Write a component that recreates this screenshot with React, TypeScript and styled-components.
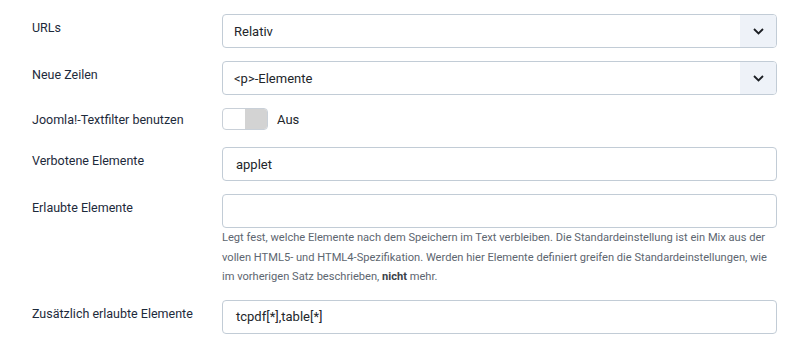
import React from "react";
import styled, { createGlobalStyle } from "styled-components";

const GlobalStyle = createGlobalStyle`
  html, body {
    margin: 0;
    padding: 0;
    background: #ffffff;
  }
  body {
    font-family: Roboto, "Noto Sans", "Liberation Sans", sans-serif;
    color: #1f2b3a;
  }
  * {
    box-sizing: border-box;
  }
`;

const Form = styled.div`
  width: 794px;
  padding: 14px 17px 0 32px;
  display: grid;
  gap: 13px;
`;

const Row = styled.div`
  display: grid;
  grid-template-columns: 190px 555px;
  align-items: start;
`;

const Label = styled.label<{ $top?: number }>`
  font-size: 12.5px;
  line-height: 19.5px;
  padding-top: ${(p) => p.$top ?? 4}px;
  color: #1d2a3b;
`;

const Control = styled.div`
  display: grid;
`;

const Field = styled.div<{ $indent?: number; $select?: boolean }>`
  height: 34px;
  border: 1px solid #c2ccd6;
  border-radius: 4px;
  background: #fff;
  display: flex;
  align-items: center;
  padding-left: ${(p) => p.$indent ?? 13}px;
  padding-right: ${(p) => (p.$select ? 0 : 13)}px;
  font-size: 13px;
  color: #22262a;
  overflow: hidden;
`;

const SelectValue = styled.span`
  flex: 1;
`;

const Chevron = styled.span`
  width: 36px;
  align-self: stretch;
  background: #eef2f8;
  display: grid;
  place-items: center;
`;

const SwitchRow = styled.div`
  display: flex;
  align-items: center;
  gap: 9px;
  padding: 0 0 4px;
  font-size: 13px;
  color: #22262a;
`;

const Switch = styled.span`
  width: 46px;
  height: 22px;
  border: 1px solid #c9d0d8;
  border-radius: 4px;
  background: #fff;
  display: flex;
  justify-content: flex-end;
  overflow: hidden;
`;

const Knob = styled.span`
  width: 22px;
  height: 100%;
  background: #d3d3d3;
`;

const Help = styled.p`
  margin: 0;
  font-size: 11.12px;
  line-height: 19.5px;
  color: #5d6670;
  b {
    color: #3a4148;
  }
`;

function Select({ value }: { value: string }) {
  return (
    <Field $indent={11} $select>
      <SelectValue>{value}</SelectValue>
      <Chevron>
        <svg width="11" height="7" viewBox="0 0 11 7">
          <path d="M1 1l4.5 4.5L10 1" fill="none" stroke="#1c1f24" strokeWidth="1.8" />
        </svg>
      </Chevron>
    </Field>
  );
}

export default function App() {
  return (
    <>
      <GlobalStyle />
      <Form>
        <Row>
          <Label>URLs</Label>
          <Select value="Relativ" />
        </Row>
        <Row>
          <Label>Neue Zeilen</Label>
          <Select value="<p>-Elemente" />
        </Row>
        <Row>
          <Label $top={2}>Joomla!-Textfilter benutzen</Label>
          <SwitchRow>
            <Switch>
              <Knob />
            </Switch>
            Aus
          </SwitchRow>
        </Row>
        <Row>
          <Label>Verbotene Elemente</Label>
          <Field>applet</Field>
        </Row>
        <Row>
          <Label>Erlaubte Elemente</Label>
          <Control>
            <Field />
            <Help>
              Legt fest, welche Elemente nach dem Speichern im Text verbleiben. Die Standardeinstellung ist ein Mix aus der
              vollen HTML5- und HTML4-Spezifikation. Werden hier Elemente definiert greifen die Standardeinstellungen, wie
              im vorherigen Satz beschrieben, <b>nicht</b> mehr.
            </Help>
          </Control>
        </Row>
        <Row>
          <Label>Zusätzlich erlaubte Elemente</Label>
          <Field>tcpdf[*],table[*]</Field>
        </Row>
      </Form>
    </>
  );
}
